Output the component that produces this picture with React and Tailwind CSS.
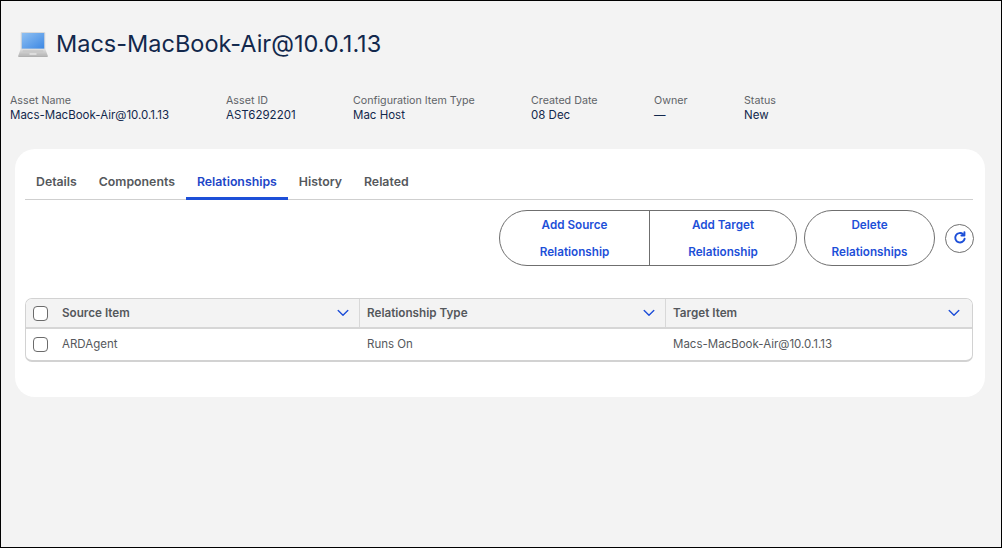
import React from "react";

function Laptop() {
  return (
    <svg width="30" height="28" viewBox="0 0 30 28" className="shrink-0">
      <defs>
        <linearGradient id="scr" x1="0" y1="0" x2="1" y2="1">
          <stop offset="0" stopColor="#8fc0f2" />
          <stop offset="1" stopColor="#3d88e4" />
        </linearGradient>
        <linearGradient id="base" x1="0" y1="0" x2="0" y2="1">
          <stop offset="0" stopColor="#e0e0e0" />
          <stop offset="1" stopColor="#b9b9b9" />
        </linearGradient>
      </defs>
      <path d="M3.5 2h23l.8.8V19H2.7V2.8z" fill="#d6d8da" />
      <rect x="3.8" y="3" width="22.4" height="15.6" fill="url(#scr)" />
      <path d="M2.7 19h24.6l2.4 6.5H.3z" fill="url(#base)" />
      <path d="M5 20.3h20l.8 2.3H4.2z" fill="#c9c9c9" />
      <rect x="11.5" y="23.4" width="7" height="1.2" fill="#eeeeee" />
      <rect x="0.3" y="25.5" width="29.4" height="1.3" fill="#a0a0a0" />
    </svg>
  );
}

function Meta({ label, value, className }) {
  return (
    <div className={className}>
      <div className="text-[10.7px] leading-[15px] text-[#5f6368]">{label}</div>
      <div className="text-[11.5px] leading-[15px] text-[#12284c]">{value}</div>
    </div>
  );
}

function Chevron() {
  return (
    <svg width="12" height="8" viewBox="0 0 12 8" fill="none" stroke="#1d4ed8" strokeWidth="1.4" strokeLinecap="round" strokeLinejoin="round">
      <path d="M1.2 1.5 6 6.2l4.8-4.7" />
    </svg>
  );
}

function Box() {
  return <span className="block w-[15px] h-[15px] rounded-[4px] border border-[#6b6b6b] bg-white shrink-0" />;
}

function Tab({ children, active }) {
  return (
    <div className={`h-[35px] px-[11px] pt-[3px] flex items-center text-[12.3px] font-semibold border-b-[3px] ${active ? "text-[#1d46c8] border-[#1d4fd8]" : "text-[#55585c] border-transparent"}`}>
      {children}
    </div>
  );
}

function HeadCell({ children, className }) {
  return (
    <div className={`flex items-center justify-between text-[11.7px] font-semibold text-[#55585c] ${className}`}>
      <span className="pt-[2px]">{children}</span>
      <Chevron />
    </div>
  );
}

function BtnText({ a, b }) {
  return (
    <div className="pt-[1px]">
      <span className="block leading-[27px]">{a}</span>
      <span className="block leading-[27px]">{b}</span>
    </div>
  );
}

export default function App() {
  return (
    <div className="w-[1002px] h-[548px] bg-[#f3f3f3] border border-black overflow-hidden" style={{ fontFamily: "Inter, 'Liberation Sans', sans-serif" }}>
      <div className="flex items-center gap-[8px] pl-[17px] pt-[28px] h-[57px]">
        <Laptop />
        <h1 className="text-[23.5px] leading-[30px] font-normal text-[#12284c]">Macs-MacBook-Air@10.0.1.13</h1>
      </div>
      <div className="flex pl-[9px] mt-[35px]">
        <Meta className="w-[216px]" label="Asset Name" value="Macs-MacBook-Air@10.0.1.13" />
        <Meta className="w-[127px]" label="Asset ID" value="AST6292201" />
        <Meta className="w-[178px]" label="Configuration Item Type" value="Mac Host" />
        <Meta className="w-[123px]" label="Created Date" value="08 Dec" />
        <Meta className="w-[90px]" label="Owner" value="—" />
        <Meta label="Status" value="New" />
      </div>
      <div className="ml-[14px] mt-[26px] w-[970px] h-[248px] bg-white rounded-[20px] pl-[10px] pr-[11px] pt-[16px]">
        <div className="flex border-b border-[#cfcfcf] h-[35px] mr-[1px]">
          <Tab>Details</Tab>
          <Tab>Components</Tab>
          <Tab active>Relationships</Tab>
          <Tab>History</Tab>
          <Tab>Related</Tab>
        </div>
        <div className="flex justify-end items-center mt-[10px] text-[11.7px] font-semibold text-[#1d4fd8] text-center">
          <div className="flex h-[56px] border border-[#6f6f6f] rounded-full">
            <div className="w-[150px] border-r border-[#6f6f6f]"><BtnText a="Add Source" b="Relationship" /></div>
            <div className="w-[146px]"><BtnText a="Add Target" b="Relationship" /></div>
          </div>
          <div className="w-[131px] h-[56px] border border-[#6f6f6f] rounded-full ml-[7px]"><BtnText a="Delete" b="Relationships" /></div>
          <div className="w-[29px] h-[29px] border border-[#6f6f6f] rounded-full ml-[10px] flex items-center justify-center">
            <svg width="14" height="14" viewBox="0 0 13 13" fill="none" stroke="#1d4fd8" strokeWidth="1.8" strokeLinecap="round">
              <path d="M10.8 7.2A4.4 4.4 0 1 1 9.4 3" />
              <path d="M10.6 1.2v2.9H7.8" strokeLinejoin="round" />
            </svg>
          </div>
        </div>
        <div className="mt-[32px] mr-[1px] border border-b-2 border-[#d2d2d2] rounded-[7px] overflow-hidden">
          <div className="flex h-[30px] bg-[#f3f3f3] border-b-2 border-[#d6d6d6]">
            <div className="w-[36px] flex items-center pl-[7px]"><Box /></div>
            <HeadCell className="w-[297px] pr-[10px]">Source Item</HeadCell>
            <HeadCell className="w-[306px] pl-[7px] pr-[10px] border-l border-[#d8d8d8]">Relationship Type</HeadCell>
            <HeadCell className="flex-1 pl-[7px] pr-[12px] border-l border-[#d8d8d8]">Target Item</HeadCell>
          </div>
          <div className="flex h-[31px] items-center text-[11.5px] text-[#55585c]">
            <div className="w-[36px] flex items-center pl-[7px]"><Box /></div>
            <div className="w-[297px] pt-[1px]">ARDAgent</div>
            <div className="w-[306px] pl-[8px] pt-[1px]">Runs On</div>
            <div className="flex-1 pl-[8px] pt-[1px]">Macs-MacBook-Air@10.0.1.13</div>
          </div>
        </div>
      </div>
    </div>
  );
}
